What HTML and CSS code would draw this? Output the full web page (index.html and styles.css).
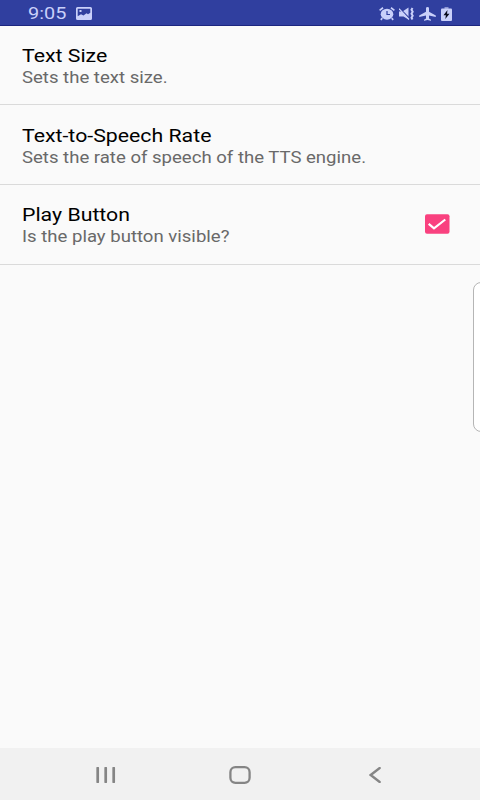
FILE: index.html
```
<!DOCTYPE html>
<html lang="en">
<head>
<meta charset="utf-8">
<title>Settings</title>
<link rel="stylesheet" href="styles.css">
</head>
<body>
<div class="screen">
  <header class="status">
    <span class="clock">9:05</span>
    <svg class="picture" width="16" height="13" viewBox="0 0 16 13"><path fill="currentColor" fill-rule="evenodd" d="M1.500 0h13Q16 0 16 1.500v10Q16 13 14.500 13h-13Q0 13 0 11.500v-10Q0 0 1.500 0zM1.700 1.700v7.500L5 7.200 7.500 8.600 10.500 6.300 12 7.300 14.300 5.800V1.700zM3.500 3h2v2h-2z"/></svg>
    <div class="indicators">
      <svg width="16" height="14" viewBox="0 0 16 14"><path d="M.6 3.400 4 .8M15.400 3.400 12 .8M3.300 11.200 1.800 12.800M12.700 11.200l1.500 1.600" stroke="currentColor" stroke-width="1.700"/><ellipse cx="8" cy="7.200" rx="6.300" ry="5.500" fill="currentColor"/><path d="M8 3.900v3.600h3" fill="none" stroke="#303f9f" stroke-width="1.200"/></svg>
      <svg width="16" height="14" viewBox="0 0 16 14"><path d="M0 4.500h3.500L9.500 .5v12L4.500 9.500H0z" fill="currentColor"/><path d="M.5 1.200 10.800 11.800" stroke="#303f9f" stroke-width="1.300"/><path d="M0 1.700 10 12.500" stroke="currentColor" stroke-width="1.200"/><path d="m13.500 1-1 1.700 1.200 2-1.200 2 1.200 2-1.200 2 1 1.800" fill="none" stroke="currentColor" stroke-width="2"/></svg>
      <svg width="17" height="14" viewBox="0 0 17 14"><path d="M8.500 0q1.500 0 1.500 1.300v3.500l6.800 3.700v1.500l-6.800-1.600v3l2 1.300v1l-3.500-.7-3.500.7v-1l2-1.300V8.400L.2 10V8.500L7 4.800V1.300Q7 0 8.500 0z" fill="currentColor"/></svg>
      <svg class="battery" width="11" height="14" viewBox="0 0 11 14"><path d="M3.500 0h4v2H3.500z" fill="#8d96d2"/><path d="M1 1.500h9q1 0 1 1V13q0 1-1 1H1q-1 0-1-1V2.500q0-1 1-1z" fill="currentColor"/><path d="M6.500 3 2.500 8.200h2.400L4.300 12 8.500 6.800H6z" fill="#080b1c"/></svg>
    </div>
  </header>
  <main class="settings">
    <section class="row">
      <div><h2 class="title">Text Size</h2><p class="summary">Sets the text size.</p></div>
    </section>
    <section class="row">
      <div><h2 class="title">Text-to-Speech Rate</h2><p class="summary">Sets the rate of speech of the TTS engine.</p></div>
    </section>
    <section class="row">
      <div><h2 class="title">Play Button</h2><p class="summary">Is the play button visible?</p></div>
      <svg class="check" width="26" height="20" viewBox="0 0 26 20"><rect x="1" y=".3" width="24.500" height="19.400" rx="2" fill="#f9417f"/><path d="m4.700 9.800 5.300 4.500L21.300 5.500" fill="none" stroke="#fff" stroke-width="2.200"/></svg>
    </section>
  </main>
  <nav class="nav">
    <svg width="20" height="16" viewBox="0 0 20 16"><path d="M1.700 1v14M9.700 1v14M17.700 1v14" stroke="#858585" stroke-width="2.700" stroke-linecap="round"/></svg>
    <svg class="home" width="22" height="18" viewBox="0 0 22 18"><rect x="1.400" y="1.200" width="19.200" height="15.600" rx="5" fill="none" stroke="#858585" stroke-width="2.300"/></svg>
    <svg width="12" height="16" viewBox="0 0 12 16"><path d="M10.700 1 1.700 8l9 7" fill="none" stroke="#858585" stroke-width="2.300" stroke-linecap="round"/></svg>
  </nav>
  <div class="edge-panel"></div>
</div>
</body>
</html>
```
FILE: styles.css
```
* { box-sizing: border-box; }
body { margin: 0; font-family: Roboto, "Liberation Sans", sans-serif; background: #fafafa; }
.screen { position: relative; width: 480px; height: 800px; display: flex; flex-direction: column; overflow: hidden; }
.status { height: 26px; display: flex; align-items: center; padding: 0 27px 0 28px; background: #303f9f; border-bottom: 1px solid #1c2680; color: #c9d0fa; }
.clock { width: 48px; font-size: 17px; line-height: 24px; transform: scaleX(1.17); transform-origin: left; white-space: nowrap; padding-top: 1px; }
.picture { margin-top: 1px; }
.indicators { display: flex; gap: 4px; margin-left: auto; margin-top: 2px; }
.battery { margin-left: 1px; margin-right: 1px; }
.settings { flex: 1; }
.row { height: 80px; display: flex; justify-content: space-between; padding: 20px 30px 0 21.500px; border-bottom: 1px solid #dadada; }
.row:first-child { height: 79px; padding-top: 19px; }
.row:last-child { padding-top: 19.400px; }
.title, .summary { margin: 0; font-weight: 400; white-space: nowrap; transform-origin: left; }
.title { font-size: 17.600px; line-height: 22px; color: #000; transform: scaleX(1.210); }
.summary { font-size: 15.700px; line-height: 22px; color: #696969; transform: scaleX(1.183); }
.check { margin-top: 10px; }
.nav { height: 52px; display: flex; align-items: center; justify-content: space-between; padding: 2px 99px 0 96px; background: #f1f1f1; }
.home { margin-left: -6px; }
.edge-panel { position: absolute; left: 473px; top: 282px; width: 20px; height: 150px; border: 1px solid #b5b5b5; border-radius: 8px; background: #fff; }
```
